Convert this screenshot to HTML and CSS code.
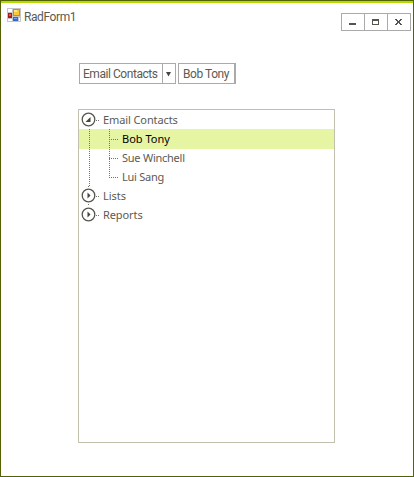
FILE: index.html
```html
<!DOCTYPE html>
<html lang="en">
<head>
<meta charset="utf-8">
<title>RadForm1</title>
<link rel="stylesheet" href="styles.css">
</head>
<body>
<main class="form">
  <header class="titlebar">
    <svg class="app-icon" width="14" height="14" viewBox="0 0 14 14" shape-rendering="crispEdges">
      <path fill="#c5c5c8" d="M0 0h14v14H0z"/>
      <path fill="#fff" d="M1 1h4v3H1zM1 11h4v2H1zM12 10h1v3h-1z"/>
      <path fill="#a71a16" d="M1 5h4v5H1z"/><path fill="#e8584a" d="M2 6h2v2H2z"/>
      <path fill="#c89020" d="M6 1h7v7H6z"/><path fill="#fcc934" d="M7 2h5v5H7z"/><path fill="#ffe68a" d="M7 2h3v2H7z"/>
      <path fill="#3568cc" d="M6 9h5v4H6z"/><path fill="#75a7f5" d="M7 10h3v1H7z"/>
    </svg>
    <h1 class="title">RadForm1</h1>
    <div class="controls">
      <button class="control" aria-label="Minimize"><svg width="22" height="16" shape-rendering="crispEdges"><path fill="#55554d" d="M7 9h7v2H7z"/></svg></button>
      <button class="control" aria-label="Maximize"><svg width="22" height="16" shape-rendering="crispEdges"><path fill="#55554d" fill-rule="evenodd" d="M7 5h7v6H7zM8 7v3h5V7z"/></svg></button>
      <button class="control" aria-label="Close"><svg width="22" height="16" shape-rendering="crispEdges"><path fill="#55554d" d="M7 5h2v1H7zM12 5h2v1h-2zM8 6h2v1H8zM11 6h2v1h-2zM9 7h3v2H9zM8 9h2v1H8zM11 9h2v1h-2zM7 10h2v1H7zM12 10h2v1h-2z"/></svg></button>
    </div>
  </header>
  <nav class="breadcrumb">
    <button class="crumb crumb-split"><span class="crumb-text wide">Email Contacts</span><span class="arrow"><svg width="12" height="19"><path fill="#45453e" d="M3 8h5L5.500 12.500z"/></svg></span></button>
    <button class="crumb crumb-last"><span class="crumb-text">Bob Tony</span></button>
  </nav>
  <ul class="tree">
    <li class="row"><svg class="lines" width="24" height="19"><circle class="ring" cx="9.500" cy="9.500" r="6.300"/><path class="glyph" d="M11.500 7v5h-5z"/><path class="dots" d="M17 10.500h4"/></svg><span class="tight">Email Contacts</span></li>
    <li class="row selected"><svg class="lines" width="43" height="19"><path class="dots" d="M10.500 0v19M30.500 0v19M30 10.500h10"/></svg><span>Bob Tony</span></li>
    <li class="row"><svg class="lines" width="43" height="19"><path class="dots" d="M10.500 1v18M30.500 1v18M30 10.500h10"/></svg><span class="tighter">Sue Winchell</span></li>
    <li class="row"><svg class="lines" width="43" height="19"><path class="dots" d="M10.500 0v19M30.500 0v10M30 10.500h10"/></svg><span class="tighter">Lui Sang</span></li>
    <li class="row"><svg class="lines" width="24" height="19"><circle class="ring" cx="9.500" cy="9.500" r="6.300"/><path class="glyph" d="M8.500 6.500v6l3-3z"/><path class="dots" d="M9.500 0v1M9.500 18v1M17 10.500h4"/></svg><span>Lists</span></li>
    <li class="row"><svg class="lines" width="24" height="19"><circle class="ring" cx="9.500" cy="9.500" r="6.300"/><path class="glyph" d="M8.500 6.500v6l3-3z"/><path class="dots" d="M17 10.500h4"/></svg><span class="tight">Reports</span></li>
  </ul>
</main>
</body>
</html>
```
FILE: styles.css
```css
* { box-sizing: border-box; }
body { margin: 0; background: #fff; }
.form {
  width: 414px;
  height: 477px;
  border: 1px solid #536204;
  background: #fff;
  font-family: Roboto, "Liberation Sans", sans-serif;
  font-size: 12px;
  color: #5b5b53;
}
.titlebar {
  display: flex;
  align-items: flex-start;
  height: 62px;
  border-top: 2px solid #b2dc00;
  padding: 5px 2px 0 6px;
}
.app-icon { flex: none; }
.title {
  margin: 1px 0 0 3px;
  font-size: 12px;
  line-height: 16px;
  font-weight: 400;
  letter-spacing: -0.4px;
}
.controls {
  display: flex;
  margin: 5px 0 0 auto;
  border: 1px solid #aaa;
  border-right: 0;
}
button { padding: 0; margin: 0; font: inherit; color: inherit; background: #fff; border: 0; }
.control { display: block; width: 23px; height: 16px; border-right: 1px solid #aaa; }
.control svg { display: block; }
.breadcrumb { display: flex; gap: 2px; margin-left: 78px; height: 21px; }
.crumb { display: flex; height: 21px; border: 1px solid #aaa; white-space: nowrap; line-height: 20px; }
.crumb-split { width: 97px; }
.crumb-last { width: 58px; border-right-width: 2px; }
.crumb-text { padding-left: 4px; letter-spacing: -0.45px; }
.wide { width: 82px; padding-left: 3px; text-align: left; }
.arrow { width: 13px; border-left: 1px solid #aaa; }
.arrow svg { display: block; }
.tree {
  list-style: none;
  width: 257px;
  height: 334px;
  margin: 25px 0 0 77px;
  padding: 0;
  border: 1px solid #c1c1ad;
  font-family: "Noto Sans", sans-serif;
  font-size: 11px;
}
.row { display: flex; height: 19px; line-height: 19px; white-space: nowrap; }
.selected { background: #e6f5a4; color: #000; box-shadow: 0 1px #e6f5a4; }
.tight { letter-spacing: -0.1px; }
.tighter { letter-spacing: -0.25px; }
.lines { display: block; flex: none; }
.ring { fill: #fff; stroke: #55554d; stroke-width: 1.3; }
.glyph { fill: #45453e; }
.dots { fill: none; stroke: #74746c; stroke-width: 1; stroke-dasharray: 1 1; shape-rendering: crispEdges; }
```
